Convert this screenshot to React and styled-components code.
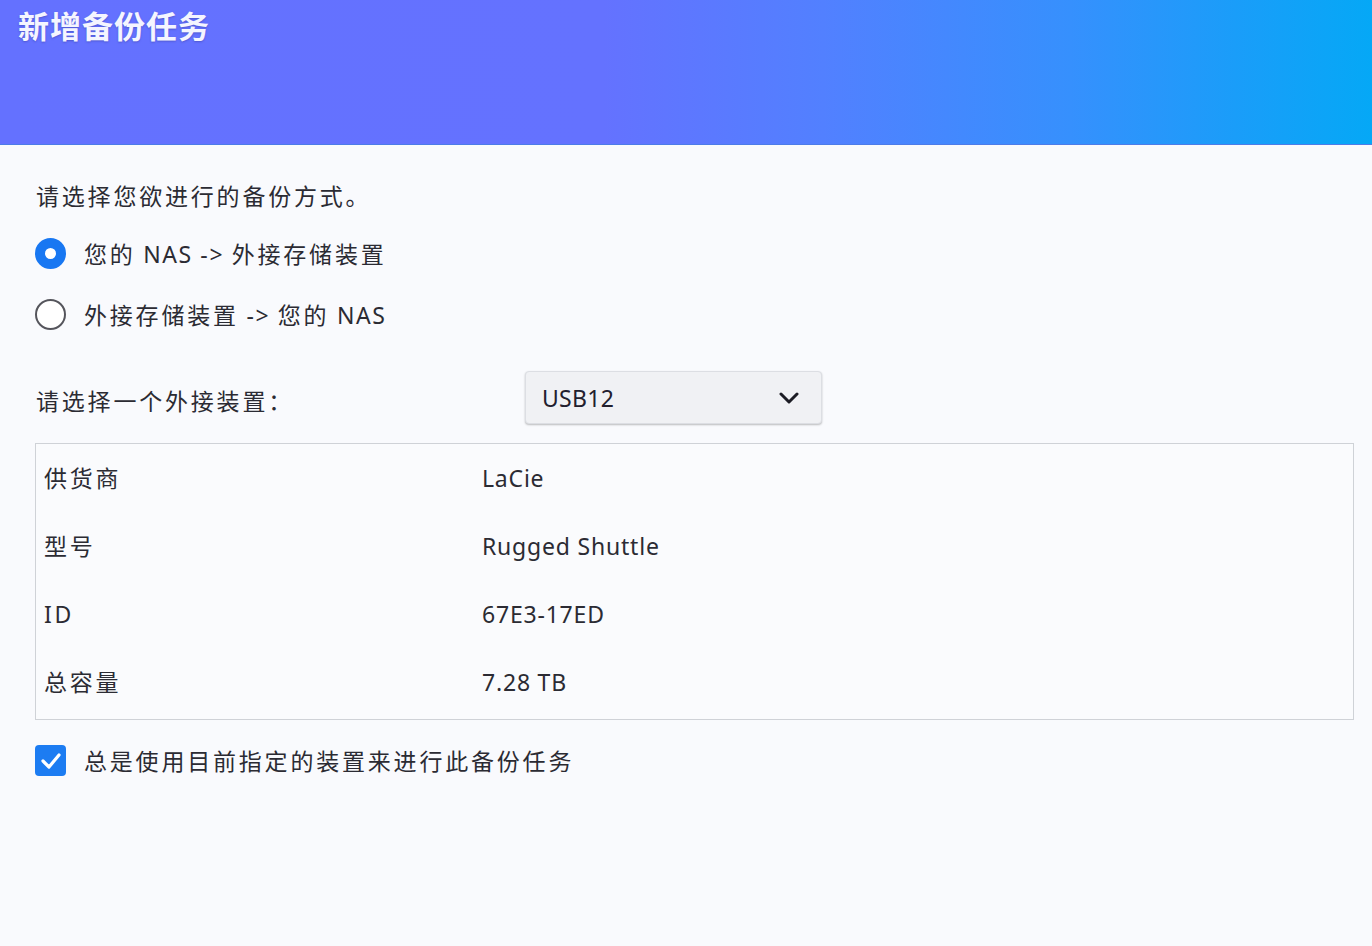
import React from "react"
import styled, { createGlobalStyle } from "styled-components"

const Global = createGlobalStyle`
  html, body {
    margin: 0;
    padding: 0;
    background: #f9fafd;
  }
  body {
    font-family: "Noto Sans", "Noto Sans CJK SC", sans-serif;
    color: #2b2b33;
  }
`

const Page = styled.div`
  width: 1372px;
  height: 946px;
  display: flex;
  flex-direction: column;
  background: #f9fafd;
  overflow: hidden;
`

const Header = styled.header`
  height: 145px;
  box-sizing: border-box;
  padding: 2px 0 0 18px;
  background: linear-gradient(90deg, #6471ff 0%, #6472ff 44%, #5280ff 60%, #3690fd 78%, #1a9df9 90%, #05a8f6 100%);
  border-bottom: 1px solid #4d7ce8;
`

const Title = styled.h1`
  margin: 0;
  font-family: "Noto Sans CJK SC", sans-serif;
  font-size: 31px;
  font-weight: 700;
  color: #f4f5ff;
  letter-spacing: 1px;
  text-shadow: 0 1px 2px rgba(40, 40, 120, 0.35);
`

const Body = styled.main`
  display: flex;
  flex-direction: column;
  padding: 36px 18px 0 35px;
`

const Text = styled.span`
  font-size: 23px;
  letter-spacing: 2.8px;
  color: #2b2b33;
  line-height: 30px;
`

const Latin = styled.span`
  letter-spacing: 1.6px;
`

const Prompt = styled(Text)`
  display: block;
  margin-left: 1px;
`

const Options = styled.div`
  display: flex;
  flex-direction: column;
  gap: 30px;
  margin-top: 27px;
`

const Option = styled.label`
  display: flex;
  align-items: center;
  gap: 18px;
`

const Radio = styled.span`
  width: 31px;
  height: 31px;
  box-sizing: border-box;
  border-radius: 50%;
  border: ${(p) => (p.$on ? "10px solid #1877f2" : "2px solid #55555c")};
  background: #fff;
  flex: none;
`

const DeviceRow = styled.div`
  display: flex;
  align-items: center;
  margin-top: 41px;
`

const DeviceLabel = styled(Text)`
  width: 489px;
  margin-left: 1px;
  margin-top: 6px;
`

const Select = styled.div`
  width: 297px;
  height: 53px;
  box-sizing: border-box;
  display: flex;
  align-items: center;
  justify-content: space-between;
  padding: 0 22px 0 16px;
  background: #f0f1f4;
  border: 1px solid #dcdee3;
  border-radius: 4px;
  box-shadow: 0 1px 2px rgba(0, 0, 0, 0.25);
  font-size: 23px;
  color: #22202e;
  letter-spacing: 0.3px;
`

const InfoBox = styled.div`
  margin-top: 19px;
  width: 1319px;
  height: 277px;
  box-sizing: border-box;
  border: 1px solid #cfd2d7;
  background: #fafbfd;
  padding: 19px 0 0 8px;
  display: flex;
  flex-direction: column;
  gap: 38px;
`

const InfoRow = styled.div`
  display: grid;
  grid-template-columns: 438px 1fr;
  align-items: center;
  height: 30px;
`

const Value = styled(Text)`
  letter-spacing: 0.8px;
`

const CheckRow = styled.label`
  display: flex;
  align-items: center;
  gap: 18px;
  margin-top: 25px;
`

const Check = styled.span`
  width: 31px;
  height: 31px;
  border-radius: 4px;
  background: #1c7cf2;
  display: flex;
  align-items: center;
  justify-content: center;
  flex: none;
`

const info = [
  ["供货商", "LaCie"],
  ["型号", "Rugged Shuttle"],
  ["ID", "67E3-17ED"],
  ["总容量", "7.28 TB"],
]

export default function App() {
  return (
    <Page>
      <Global />
      <Header>
        <Title>新增备份任务</Title>
      </Header>
      <Body>
        <Prompt>请选择您欲进行的备份方式。</Prompt>
        <Options>
          <Option>
            <Radio $on />
            <Text>您的<Latin> NAS -&gt; </Latin>外接存储装置</Text>
          </Option>
          <Option>
            <Radio />
            <Text>外接存储装置<Latin> -&gt; </Latin>您的<Latin> NAS</Latin></Text>
          </Option>
        </Options>
        <DeviceRow>
          <DeviceLabel>请选择一个外接装置：</DeviceLabel>
          <Select>
            <span>USB12</span>
            <svg width="20" height="14" viewBox="0 0 20 14">
              <path d="M2 3 L10 11 L18 3" fill="none" stroke="#1c1c24" strokeWidth="3" strokeLinecap="round" strokeLinejoin="round" />
            </svg>
          </Select>
        </DeviceRow>
        <InfoBox>
          {info.map(([k, v]) => (
            <InfoRow key={k}>
              <Text>{k}</Text>
              <Value>{v}</Value>
            </InfoRow>
          ))}
        </InfoBox>
        <CheckRow>
          <Check>
            <svg width="22" height="18" viewBox="0 0 22 18">
              <path d="M3 9 L9 15 L19 3" fill="none" stroke="#fff" strokeWidth="3.2" strokeLinecap="round" strokeLinejoin="round" />
            </svg>
          </Check>
          <Text>总是使用目前指定的装置来进行此备份任务</Text>
        </CheckRow>
      </Body>
    </Page>
  )
}
